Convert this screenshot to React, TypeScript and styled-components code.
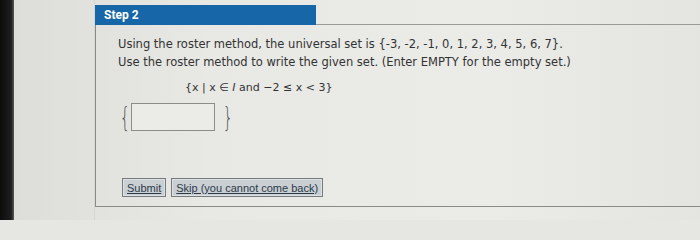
import styled, { createGlobalStyle } from "styled-components";

const GlobalStyle = createGlobalStyle`
    *, *::before, *::after {
        box-sizing: border-box;
    }
    html, body {
        margin: 0;
        padding: 0;
        width: 700px;
        height: 220px;
        overflow: hidden;
        background: #e6e6e3;
    }
    body {
        font-family: "DejaVu Sans", Verdana, sans-serif;
    }
`;

const Screen = styled.div`
    display: flex;
    width: 700px;
    height: 220px;
    background: linear-gradient(90deg, #dcdcd9 0%, #e8e8e5 30%, #ebebe8 70%, #e4e4e1 100%);
`;

const Bezel = styled.div`
    width: 14px;
    background: linear-gradient(90deg, #0c0c0c 0%, #1d1d1d 80%, #5a5a58 100%);
`;

const Margin = styled.div`
    width: 81px;
    border-right: 1px solid #d6d6d3;
`;

const Main = styled.div`
    flex: 1;
    display: flex;
    flex-direction: column;
    padding-top: 5px;
`;

const HeaderRow = styled.div`
    display: flex;
    align-items: flex-end;
`;

const StepTab = styled.div`
    width: 221px;
    height: 20px;
    background: #1666a8;
    color: #fff;
    font-family: "Roboto", "Liberation Sans", sans-serif;
    font-weight: 700;
    font-size: 12px;
    line-height: 20px;
    padding-left: 9px;
`;

const HeaderRule = styled.div`
    flex: 1;
    border-bottom: 1px solid #9a9a98;
`;

const Panel = styled.div`
    height: 182px;
    border-left: 1px solid #8a8a88;
    border-bottom: 1px solid #8a8a88;
    padding: 10px 0 0 22px;
    color: #333;
    font-size: 11.5px;
    line-height: 18px;
`;

const Expression = styled.div`
    margin: 8px 0 0 67px;
    font-size: 11px;
`;

const AnswerRow = styled.div`
    display: flex;
    align-items: center;
    gap: 4px;
    margin: 6px 0 0 0;
`;

const Brace = styled.span`
    font-family: "DejaVu Sans", sans-serif;
    font-size: 27px;
    font-weight: 300;
    color: #555;
    line-height: 28px;
    width: 9px;
    display: inline-block;
    text-align: center;
    transform: scaleX(0.6);
`;

const AnswerBox = styled.div`
    width: 84px;
    height: 28px;
    border: 1px solid #8c8c8a;
    background: #ebebe8;
    margin-right: 2px;
`;

const Buttons = styled.div`
    display: flex;
    gap: 5px;
    margin: 47px 0 0 4px;
`;

const Button = styled.button`
    height: 19px;
    padding: 0 4px;
    background: #c9cfd2;
    border: 1px solid #777b7d;
    box-shadow: inset 0 0 0 1px #dde1e3;
    color: #2c3a4a;
    font-family: "Liberation Sans", Arial, sans-serif;
    font-size: 11px;
    text-decoration: underline;
    cursor: pointer;
`;

export default function App() {
    return (
        <Screen>
            <GlobalStyle />
            <Bezel />
            <Margin />
            <Main>
                <HeaderRow>
                    <StepTab>Step 2</StepTab>
                    <HeaderRule />
                </HeaderRow>
                <Panel>
                    <div>
                        Using the roster method, the universal set is {"{"}-3, -2, -1, 0, 1, 2, 3, 4, 5, 6, 7{"}"}.
                    </div>
                    <div>Use the roster method to write the given set. (Enter EMPTY for the empty set.)</div>
                    <Expression>
                        {"{"}x | x ∈ <i>I</i> and −2 ≤ x &lt; 3{"}"}
                    </Expression>
                    <AnswerRow>
                        <Brace>{"{"}</Brace>
                        <AnswerBox />
                        <Brace>{"}"}</Brace>
                    </AnswerRow>
                    <Buttons>
                        <Button>Submit</Button>
                        <Button>Skip (you cannot come back)</Button>
                    </Buttons>
                </Panel>
            </Main>
        </Screen>
    );
}
